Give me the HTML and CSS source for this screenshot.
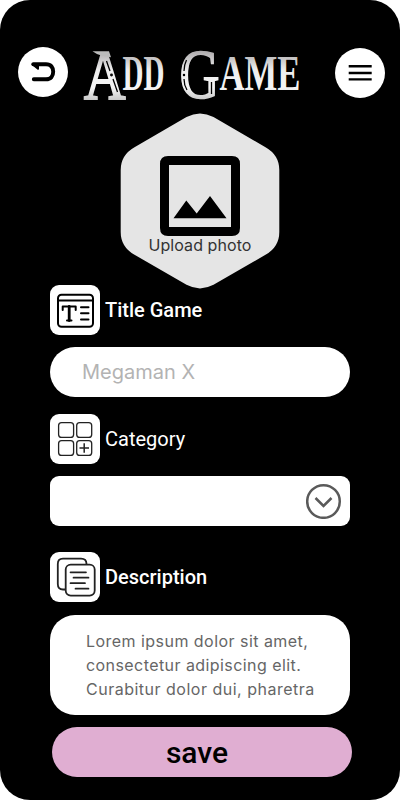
FILE: index.html
```html
<!DOCTYPE html>
<html lang="en">
<head>
<meta charset="utf-8">
<title>Add Game</title>
<link rel="stylesheet" href="styles.css">
</head>
<body>
<main class="screen">
  <header class="header">
    <button class="round back" aria-label="Back">
      <svg width="50" height="50" viewBox="0 0 50 50" fill="none" stroke="#000" stroke-width="3.9" stroke-linecap="round" stroke-linejoin="round"><path d="M15.3 17.2H28C33 17.2 35.2 20.5 35.2 24.8S33 32.3 28 32.3H15.8"/><path d="M14.500 17.2L20 21.800V17.500z" stroke-width="2" fill="#000"/></svg>
    </button>
    <svg class="logo" width="220" height="56" viewBox="82 47 220 56" role="img">
      <defs><linearGradient id="silver" gradientUnits="userSpaceOnUse" x1="0" y1="50" x2="0" y2="100"><stop offset="0" stop-color="#aaa7a9"/><stop offset=".4" stop-color="#eee"/><stop offset=".75" stop-color="#f5f5f5"/><stop offset="1" stop-color="#c8c8c8"/></linearGradient></defs>
      <g class="logo-text" fill="url(#silver)" stroke="url(#silver)">
        <text x="84" y="98.500" font-size="69" stroke-width="2" textLength="41.500" lengthAdjust="spacingAndGlyphs">A</text>
        <text class="bold" x="122.500" y="89.7" font-size="50" stroke-width="0" textLength="42" lengthAdjust="spacingAndGlyphs">DD</text>
        <text x="179.500" y="98" font-size="69" stroke-width="1.600" textLength="40" lengthAdjust="spacingAndGlyphs">G</text>
        <text class="bold" x="219.500" y="89.7" font-size="50" stroke-width="0" textLength="81" lengthAdjust="spacingAndGlyphs">AME</text>
      </g>
      <path d="M92.500 51.200h16.500l2 6-9-1.500q-5-1-9.500-4.500z" fill="#bbb"/>
      <g fill="none" stroke="#000" stroke-width="1.300"><path d="M106.500 61l3.500 10M113 79l4.500 13M186.500 60q-2.500 5-2.500 11M184 79q0 6 3 11M211.500 82v12"/><circle cx="111.500" cy="75" r=".8"/><circle cx="184" cy="75" r=".6"/></g>
    </svg>
    <button class="round menu" aria-label="Menu">
      <svg width="50" height="50" viewBox="0 0 50 50" fill="#000"><path d="M13.7 17h23v2.4h-23zM13.7 23.8h23v2.4h-23zM13.7 30.2h23v2.4h-23z"/></svg>
    </button>
  </header>

  <section class="upload">
    <svg class="hexagon" width="160" height="176" viewBox="120 113 160 176"><path d="M186.500 117Q200 110 213.500 117L265.500 147.200Q279.300 155 279.300 170V232Q279.300 247 265.500 254.800L213.500 284.800Q200 292 186.500 284.800L134.500 254.800Q120.700 247 120.700 232V170Q120.700 155 134.500 147.200Z" fill="#e5e5e5"/><path fill-rule="evenodd" d="M168 156h64q8 0 8 8v64q0 8-8 8h-64q-8 0-8-8v-64q0-8 8-8zM169 165v62h62v-62z"/><path d="M173.500 218.300l12.800-17.700 10.400 13 13.300-17.700 16.500 22.400z"/></svg>
    <span class="upload-label">Upload photo</span>
  </section>

  <div class="label title-label">
    <span class="tile"><svg width="50" height="50" viewBox="0 0 50 50" fill="none" stroke="#000" stroke-width="2" stroke-linecap="round" stroke-linejoin="round"><rect x="8" y="9.700" width="35" height="32" rx="3.500"/><path d="M8 15.500h35"/><path d="M12.700 25v-3.500h13V25M17 35.500h4.500M31 22.300h7.500M31 28.300h7.500M31 34.500h7.500"/><path d="M19.200 21.500v14" stroke-width="2.800"/></svg></span>
    <span>Title Game</span>
  </div>
  <div class="field input"><span>Megaman X</span></div>

  <div class="label category-label">
    <span class="tile"><svg width="50" height="50" viewBox="0 0 50 50" fill="none" stroke="#222" stroke-width="1.300"><rect x="8.600" y="8.600" width="15" height="14.800" rx="3"/><rect x="26.700" y="8.600" width="15" height="14.800" rx="3"/><rect x="8.600" y="26.600" width="15" height="14.800" rx="3"/><rect x="26.700" y="26.600" width="15" height="14.800" rx="3"/><path d="M29.500 34h9.500M34.200 29.200v9.500" stroke-width="1.500"/></svg></span>
    <span class="regular">Category</span>
  </div>
  <div class="field select"><svg width="36" height="36" viewBox="0 0 36 36" fill="none" stroke="#5a5a5a" stroke-width="2.500"><circle cx="17.500" cy="18.500" r="16.300"/><path d="M9.500 15l8 8 8-8"/></svg></div>

  <div class="label description-label">
    <span class="tile"><svg width="50" height="50" viewBox="0 0 50 50" fill="none" stroke="#222" stroke-width="1.800" stroke-linecap="round"><path d="M15 37.500h-2Q7.800 37.500 7.800 32V12Q7.800 6.700 13 6.700H31Q36.500 6.700 36.500 12"/><rect x="15.700" y="12.600" width="29" height="31" rx="5"/><path d="M20.500 20.300h15.500M23.500 25.700h15M20.500 31.200h14.500M25.500 36.700h13" stroke-width="1.700"/></svg></span>
    <span>Description</span>
  </div>
  <div class="field textarea">
    <span class="line first">Lorem ipsum dolor sit amet,</span>
    <span class="line second">consectetur adipiscing elit.</span>
    <span class="line third">Curabitur dolor dui, pharetra</span>
  </div>
  <button class="save">save</button>
</main>
</body>
</html>
```
FILE: styles.css
```css
* { box-sizing: border-box; }
body { margin: 0; background: #fff; }
button { border: 0; padding: 0; }
svg { display: block; }
.screen {
  width: 400px;
  height: 800px;
  padding: 47px 48px 0 50px;
  border-radius: 30px;
  background: #000;
  font-family: Roboto, sans-serif;
  overflow: hidden;
}
.header {
  display: flex;
  justify-content: space-between;
  align-items: flex-start;
  height: 66px;
  margin: 0 -33px 0 -32px;
}
.round { width: 50px; height: 50px; border-radius: 50%; background: #fff; }
.menu { margin-top: 1px; }
.logo { margin-right: 19px; overflow: visible; }
.logo-text { font-family: "Liberation Serif", serif; font-weight: 400; }
.bold { font-weight: 700; }
.upload { position: relative; width: 160px; height: 172px; margin-left: 70px; }
.upload-label {
  position: absolute;
  top: 122px;
  left: 0;
  width: 160px;
  color: #333;
  font: 16px/20px Inter, sans-serif;
  letter-spacing: .08px;
  text-align: center;
  white-space: nowrap;
}
.label {
  display: flex;
  align-items: center;
  gap: 5px;
  height: 50px;
  color: #fff;
  font-size: 20px;
  font-weight: 500;
}
.regular { font-weight: 400; }
.tile { width: 50px; height: 50px; border-radius: 9px; background: #fff; }
.field { width: 300px; background: #fff; }
.input {
  display: flex;
  align-items: center;
  height: 50px;
  margin-top: 12px;
  padding-left: 32px;
  border-radius: 25px;
  color: #b3b3b3;
  font: 20px/24px Inter, sans-serif;
}
.category-label { margin-top: 17px; }
.select {
  display: flex;
  align-items: center;
  justify-content: flex-end;
  height: 50px;
  margin-top: 12px;
  padding-right: 8px;
  border-radius: 9px;
}
.description-label { margin-top: 26px; }
.textarea {
  height: 100px;
  margin-top: 13px;
  padding: 14px 0 0 36px;
  border-radius: 25px;
  color: #666;
  font: 16px/24px Inter, sans-serif;
}
.line { display: block; white-space: nowrap; }
.first { letter-spacing: .46px; }
.second { letter-spacing: .43px; }
.third { letter-spacing: .5px; }
.save {
  display: block;
  width: 300px;
  height: 50px;
  margin: 12px 0 0 2px;
  padding: 1px 10px 0 0;
  border-radius: 25px;
  background: #e0aed2;
  color: #000;
  font: 500 30px/50px Roboto, sans-serif;
}
```
